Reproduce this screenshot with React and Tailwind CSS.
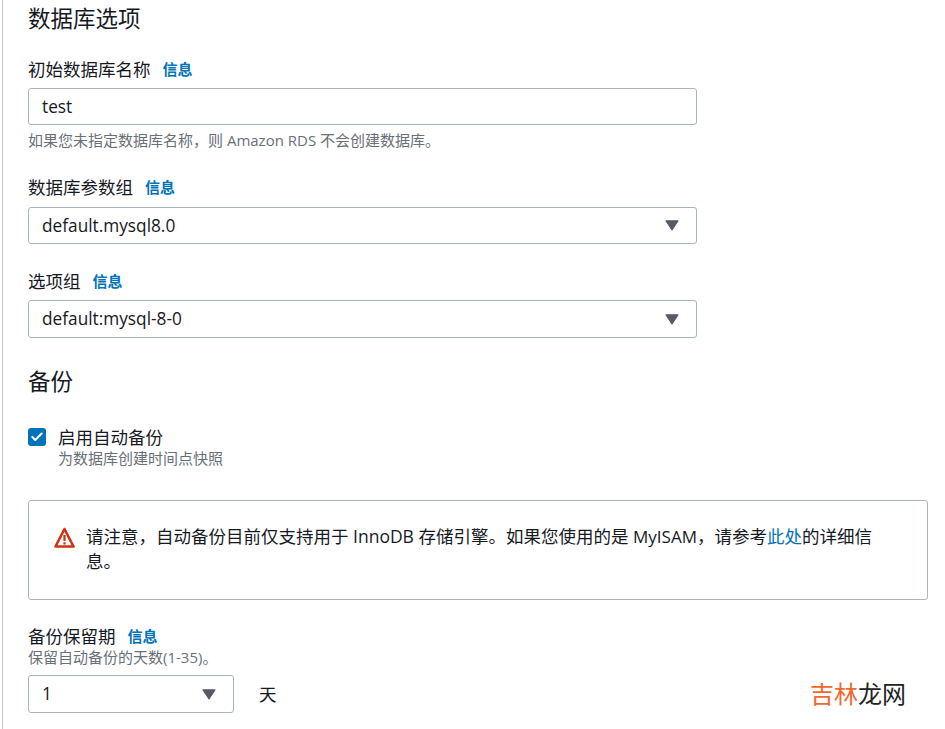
import { Check } from 'lucide-react'

const fontStack = 'font-["Open_Sans","Noto_Sans_CJK_SC",sans-serif]'

function Label({ text }) {
  return (
    <div className="flex items-center h-6 gap-3">
      <span className="text-[17.5px] leading-6 text-[#16191f]">{text}</span>
      <span className="text-[15px] leading-6 font-bold text-[#0073bb]">信息</span>
    </div>
  )
}

function Select({ value, className }) {
  return (
    <div className={`flex items-center justify-between pl-[13px] pr-[17px] bg-white border border-[#aab7b8] rounded-[3px] ${className}`}>
      <span className="text-[17.25px] text-[#16191f]">{value}</span>
      <svg width="14" height="11" viewBox="0 0 14 11">
        <path d="M0.8 0.8h12.4L7 10.2z" fill="#545b64" stroke="#545b64" strokeLinejoin="round" />
      </svg>
    </div>
  )
}

export default function App() {
  return (
    <div className={`w-[945px] h-[729px] overflow-hidden relative bg-white ${fontStack}`}>
      <div className="ml-[2px] h-full border-l border-[#c5cccc] pl-[25px] flex flex-col">
        <h2 className="text-[22.5px] leading-[30px] mt-[4px] text-[#16191f]">数据库选项</h2>

        <div className="mt-[23px]">
          <Label text="初始数据库名称" />
          <div className="mt-[7px] w-[669px] h-[37px] flex items-center pl-[13px] border border-[#aab7b8] rounded-[3px] text-[17.25px] text-[#16191f]">
            test
          </div>
          <p className="mt-[5px] text-[15px] leading-5 text-[#687078]">如果您未指定数据库名称，则 Amazon RDS 不会创建数据库。</p>
        </div>

        <div className="mt-[25px]">
          <Label text="数据库参数组" />
          <Select value="default.mysql8.0" className="mt-[8px] w-[669px] h-[37px]" />
        </div>

        <div className="mt-[25px]">
          <Label text="选项组" />
          <Select value="default:mysql-8-0" className="mt-[7px] w-[669px] h-[38px]" />
        </div>

        <h2 className="mt-[29px] text-[22.5px] leading-[30px] text-[#16191f]">备份</h2>

        <div className="mt-[28px] flex gap-3">
          <div className="mt-[3px] w-[18px] h-[18px] rounded-[3px] bg-[#0073bb] flex items-center justify-center">
            <Check size={14} strokeWidth={3.5} className="text-white" />
          </div>
          <div>
            <p className="text-[17.5px] leading-6 text-[#16191f]">启用自动备份</p>
            <p className="text-[15px] leading-5 mt-[-1px] text-[#687078]">为数据库创建时间点快照</p>
          </div>
        </div>

        <div className="mt-[32px] w-[900px] h-[100px] border border-[#aab7b8] rounded-[3px] flex gap-[11px] pl-[25px] pr-[50px] pt-[23px]">
          <svg width="21" height="22" viewBox="0 0 21 22" className="shrink-0 mt-[3px]">
            <path d="M10.5 2 L19.5 19.5 H1.5 Z" fill="none" stroke="#d13212" strokeWidth="2.6" strokeLinejoin="round" />
            <path d="M10.5 8v6M10.5 15.2v2.2" fill="none" stroke="#d13212" strokeWidth="2.2" />
          </svg>
          <p className="text-[17.5px] leading-6 text-[#16191f]">
            请注意，自动备份目前仅支持用于 InnoDB 存储引擎。如果您使用的是 <span className="text-[17px]">MyISAM</span>，请参考<span className="text-[#0073bb]">此处</span>的详细信息。
          </p>
        </div>

        <div className="mt-[24px]">
          <Label text="备份保留期" />
          <p className="text-[15px] leading-5 mt-[-1px] text-[#687078]">保留自动备份的天数(1-35)。</p>
          <div className="mt-[8px] flex items-center">
            <Select value="1" className="w-[206px] h-[38px]" />
            <span className="ml-[25px] text-[17.5px] text-[#16191f]">天</span>
          </div>
        </div>
      </div>

      <div className="absolute left-[810px] top-[678px] text-[24px] leading-8">
        <span className="text-[#f4662a]">吉林</span>
        <span className="text-[#222222]">龙网</span>
      </div>
    </div>
  )
}
